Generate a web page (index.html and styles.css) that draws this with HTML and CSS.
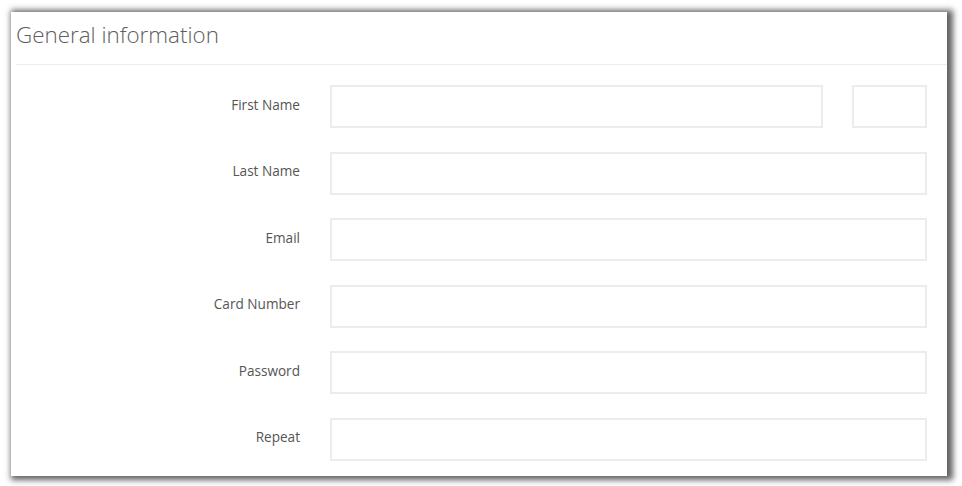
FILE: index.html
```html
<!DOCTYPE html>
<html>
<head>
<meta charset="utf-8">
<link rel="stylesheet" href="styles.css">
</head>
<body>
<div class="panel">
  <div class="panel-header">
    <h2 class="panel-title">General information</h2>
  </div>
  <form class="form">
    <div class="row">
      <label class="label">First Name</label>
      <div class="fields">
        <input class="input input-grow" type="text">
        <input class="input input-small" type="text">
      </div>
    </div>
    <div class="row">
      <label class="label">Last Name</label>
      <div class="fields"><input class="input input-grow" type="text"></div>
    </div>
    <div class="row">
      <label class="label">Email</label>
      <div class="fields"><input class="input input-grow" type="text"></div>
    </div>
    <div class="row">
      <label class="label">Card Number</label>
      <div class="fields"><input class="input input-grow" type="text"></div>
    </div>
    <div class="row">
      <label class="label">Password</label>
      <div class="fields"><input class="input input-grow" type="password"></div>
    </div>
    <div class="row">
      <label class="label">Repeat</label>
      <div class="fields"><input class="input input-grow" type="password"></div>
    </div>
  </form>
</div>
</body>
</html>
```
FILE: styles.css
```css
html, body {
  margin: 0;
  padding: 0;
  background: #ffffff;
}
body {
  font-family: "Open Sans", "Liberation Sans", sans-serif;
  padding: 12px 0 0 11px;
  height: 486px;
  box-sizing: border-box;
}
.panel {
  width: 936px;
  height: 464px;
  background: #ffffff;
  box-shadow: 3px 1px 6px 3px rgba(0, 0, 0, 0.62);
  overflow: hidden;
}
.panel-header {
  margin-left: 5px;
  height: 53px;
  border-bottom: 1px solid #ececec;
  box-sizing: border-box;
}
.panel-title {
  margin: 0;
  padding-top: 8px;
  font-size: 22.4px;
  font-weight: 300;
  line-height: 30px;
  color: #5e5e5e;
}
.form {
  display: flex;
  flex-direction: column;
  gap: 23.6px;
  padding: 20px 20px 0 0;
}
.row {
  display: flex;
  align-items: center;
  height: 43px;
}
.label {
  width: 289px;
  text-align: right;
  font-size: 13.6px;
  color: #555555;
  margin-top: -5px;
}
.fields {
  flex: 1;
  display: flex;
  gap: 29px;
  margin-left: 30px;
  height: 43px;
}
.input {
  box-sizing: border-box;
  height: 43px;
  border: 2px solid #ececec;
  background: #ffffff;
  margin: 0;
  padding: 0 10px;
  outline: none;
}
.input-grow {
  flex: 1;
  min-width: 0;
}
.input-small {
  width: 75px;
  flex: none;
}
```
